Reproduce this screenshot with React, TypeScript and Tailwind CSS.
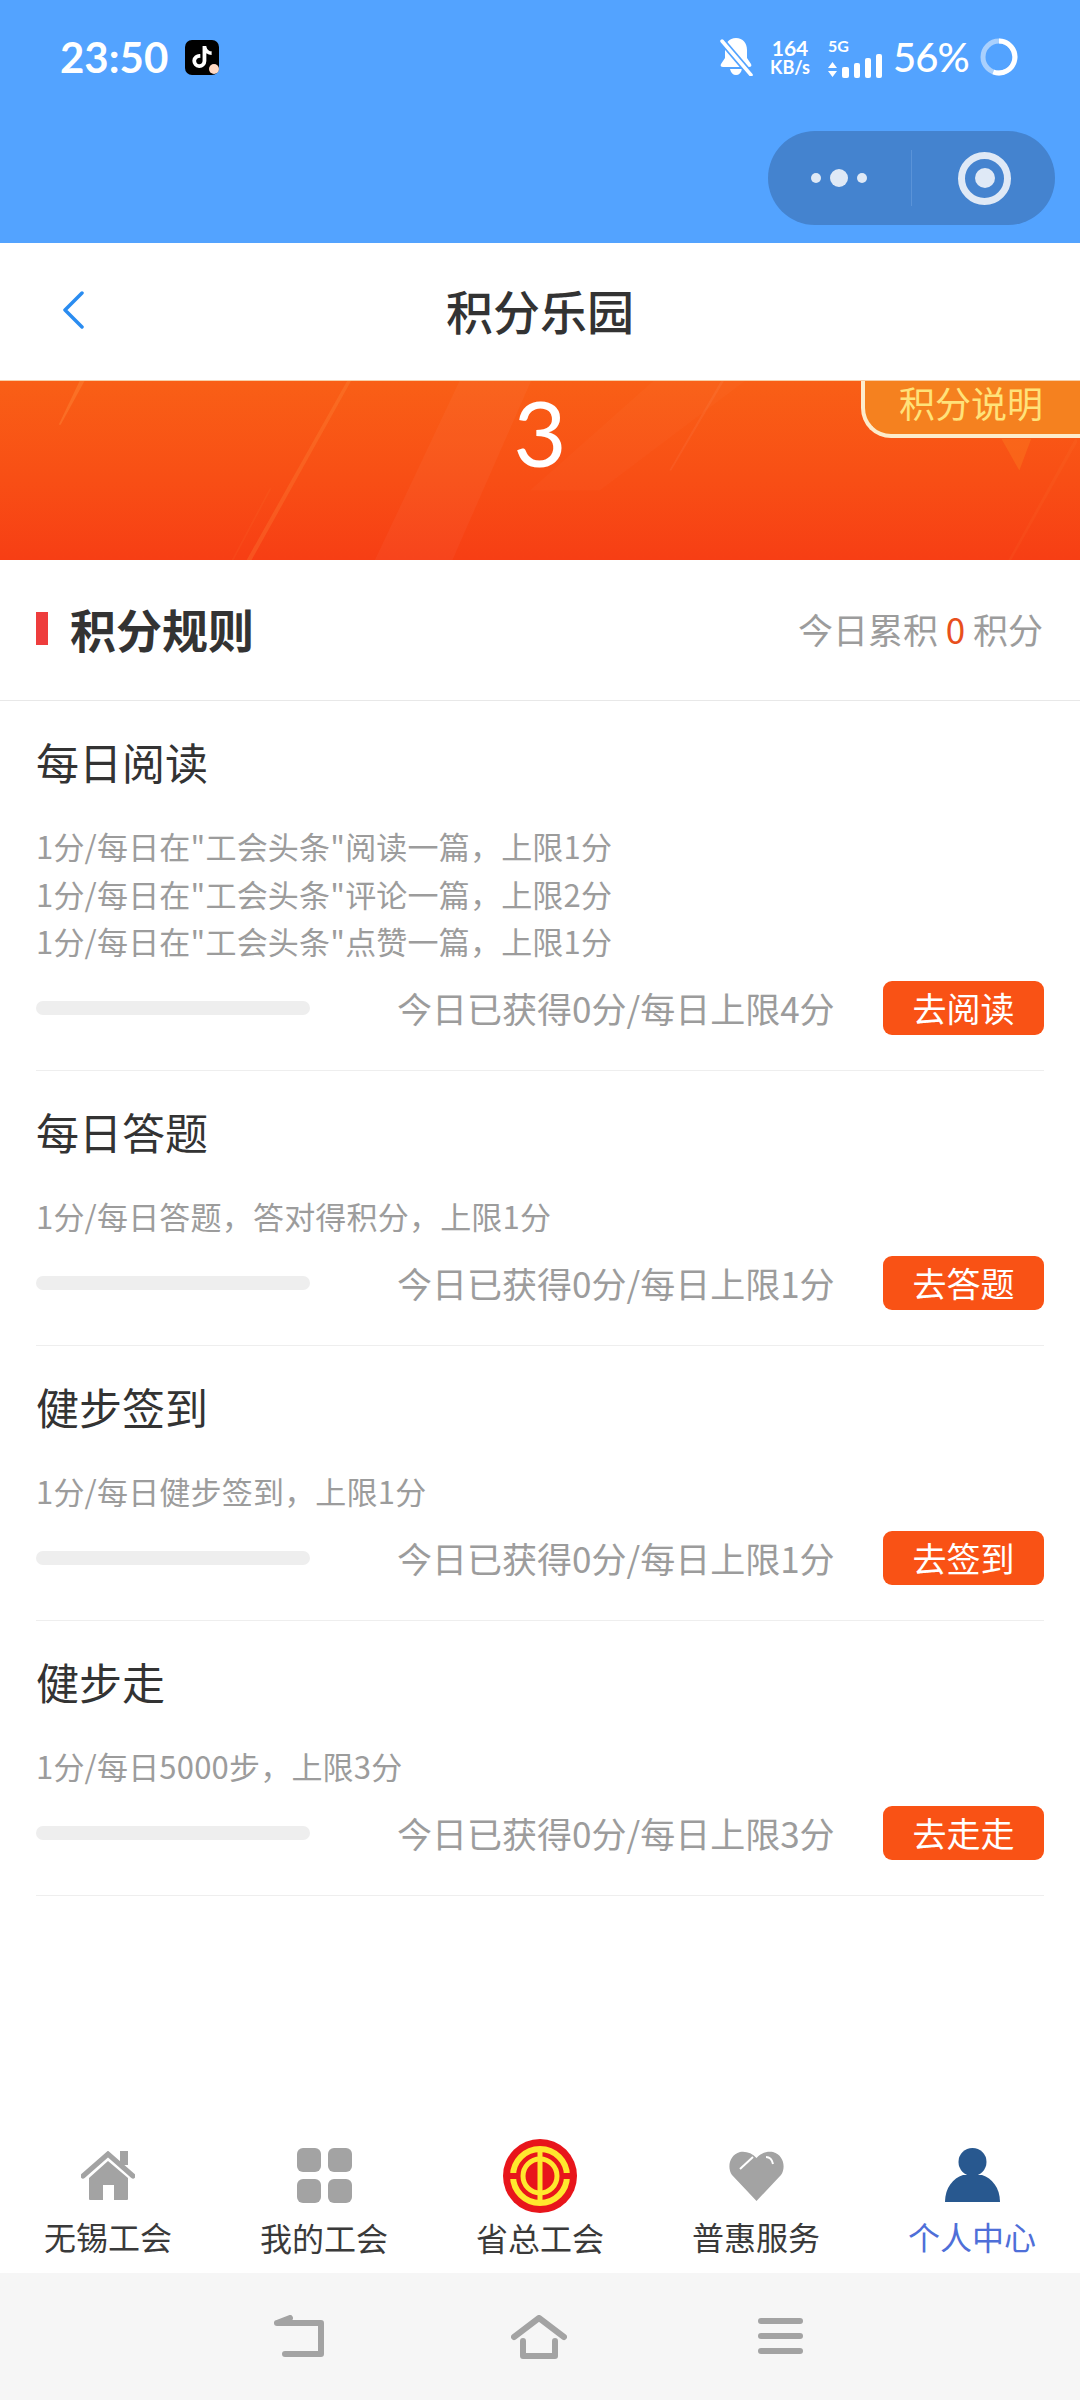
import { FaTiktok } from 'react-icons/fa6';

const rules = [
  {
    title: '每日阅读',
    lines: ['1分/每日在"工会头条"阅读一篇，上限1分', '1分/每日在"工会头条"评论一篇，上限2分', '1分/每日在"工会头条"点赞一篇，上限1分'],
    status: '今日已获得0分/每日上限4分',
    action: '去阅读',
  },
  {
    title: '每日答题',
    lines: ['1分/每日答题，答对得积分，上限1分'],
    status: '今日已获得0分/每日上限1分',
    action: '去答题',
  },
  {
    title: '健步签到',
    lines: ['1分/每日健步签到，上限1分'],
    status: '今日已获得0分/每日上限1分',
    action: '去签到',
  },
  {
    title: '健步走',
    lines: ['1分/每日5000步，上限3分'],
    status: '今日已获得0分/每日上限3分',
    action: '去走走',
  },
];

function StatusBar() {
  return (
    <div className="flex h-[114px] items-center pl-[60px] pr-[62px] text-white font-['Lato','Liberation_Sans',sans-serif]">
      <span className="text-[42px] font-bold leading-none">23:50</span>
      <div className="relative ml-[17px] flex h-[35px] w-[34px] items-center justify-center rounded-[7px] bg-black">
        <FaTiktok className="h-[22px] w-[22px] text-white" />
        <span className="absolute bottom-[1px] right-[0px] h-[10px] w-[10px] rounded-full bg-[#ffd9c4]" />
      </div>
      <svg viewBox="0 0 35 38" className="ml-auto h-[38px] w-[35px]" fill="white">
        <path d="M17 0c7 0 11 5 11 12v8l4 6c1 2 0 3-2 3H4c-2 0-3-1-2-3l4-6v-8C6 5 10 0 17 0z" />
        <path d="M11 31h12c-1 4-3 6-6 6s-5-2-6-6z" />
        <path d="M3 3l29 34" stroke="#53a3ff" strokeWidth="7" />
        <path d="M3 3l29 34" stroke="white" strokeWidth="3.5" strokeLinecap="round" />
      </svg>
      <div className="ml-[14px] flex w-[44px] flex-col items-center font-bold">
        <span className="text-[21px] leading-[20px]">164</span>
        <span className="text-[18px] leading-[18px]">KB/s</span>
      </div>
      <div className="ml-[16px] flex w-[54px] flex-col">
        <span className="text-[16px] font-bold leading-[17px]">5G</span>
        <svg viewBox="0 0 54 24" className="h-[24px] w-[54px]" fill="white">
          <path d="M0 11l4.500-6 4.500 6zM0 14h9l-4.500 6z" transform="translate(0 3)" />
          <rect x="14" y="13" width="7" height="11" rx="2" />
          <rect x="26" y="9" width="6" height="15" rx="2" />
          <rect x="37" y="4" width="6" height="20" rx="2" />
          <rect x="48" y="0" width="6" height="24" rx="2" />
        </svg>
      </div>
      <span className="ml-[11px] w-[75px] text-[40px] font-medium leading-none tracking-[-1px]">56%</span>
      <svg viewBox="0 0 38 38" className="ml-[12px] h-[38px] w-[38px]" fill="none" strokeWidth="5">
        <circle cx="19" cy="19" r="16" stroke="#a9d0fd" />
        <path d="M19 3A16 16 0 1 1 13.300 34" stroke="white" />
      </svg>
    </div>
  );
}

function Capsule() {
  return (
    <div className="flex justify-end pb-[18px] pr-[25px] pt-[17px]">
      <div className="flex h-[94px] w-[287px] items-center rounded-full bg-[#4483cf]">
        <div className="flex w-[143px] items-center justify-end gap-[9px] pr-[44px]">
          <span className="h-[10px] w-[10px] rounded-full bg-[#dfe9f6]" />
          <span className="h-[18px] w-[18px] rounded-full bg-[#dfe9f6]" />
          <span className="h-[10px] w-[10px] rounded-full bg-[#dfe9f6]" />
        </div>
        <div className="h-[56px] w-px bg-[#5a93d8]" />
        <div className="flex flex-1 items-center pl-[46px]">
          <div className="flex h-[53px] w-[53px] items-center justify-center rounded-full border-[7px] border-[#dfe9f6]">
            <span className="h-[20px] w-[20px] rounded-full bg-[#dfe9f6]" />
          </div>
        </div>
      </div>
    </div>
  );
}

function Banner() {
  return (
    <div className="relative h-[180px] border-t border-[#f7cfa8] bg-gradient-to-b from-[#f95f16] to-[#f73e14]">
      {/* faint streaks of the background image */}
      <svg viewBox="0 0 1080 180" className="absolute inset-0 h-full w-full">
        <path d="M77 0h5L58 44h-2z" fill="#ff9a4a" opacity="0.3" />
        <path d="M346 0h4L250 180h-5z" fill="#ff9a4a" opacity="0.22" />
        <path d="M268 108h2l-38 72h-2z" fill="#ff9a4a" opacity="0.08" />
        <path d="M459 0h72L452 180h-78z" fill="#ffffff" opacity="0.035" />
        <path d="M654 0h92L600 110h-70z" fill="#ffffff" opacity="0.02" />
        <path d="M722 0h3L672 90h-2z" fill="#ffffff" opacity="0.05" />
        <path d="M1004 58h30l-12 32z" fill="#fa7a20" opacity="0.45" />
        <path d="M1078 58h2v4l-66 118h-3z" fill="#ff9a4a" opacity="0.08" />
      </svg>
      <div className="relative mx-auto w-fit text-[92px] leading-[102px] text-white font-['Lato','Liberation_Sans',sans-serif]">3</div>
      <div className="absolute right-0 top-0 flex h-[57px] w-[219px] items-center rounded-bl-[30px] border-b-[4px] border-l-[4px] border-[#fdeccb] bg-[#f5811f] pb-[12px] pl-[34px] text-[36px] leading-none text-[#ffe27a]">
        积分说明
      </div>
    </div>
  );
}

function RuleRow({ rule }: { rule: (typeof rules)[number] }) {
  return (
    <div className="mx-[36px] border-b border-[#eeeeee] pb-[35.5px] pt-[39px]">
      <div className="text-[43px] leading-[42px] text-[#333333]">{rule.title}</div>
      <div className="mt-[40px] text-[31px] leading-[47.5px] tracking-[0.2px] text-[#9c9c9c]">
        {rule.lines.map((line) => (
          <div key={line}>{line}</div>
        ))}
      </div>
      <div className="mt-[16px] flex items-center">
        <div className="h-[14px] w-[274px] rounded-full bg-[#eeeeee]" />
        <span className="ml-[87px] text-[35px] leading-none text-[#9c9c9c]">{rule.status}</span>
        <button className="ml-auto h-[54px] w-[161px] rounded-[9px] bg-[#f95215] text-[34px] leading-none text-white">
          {rule.action}
        </button>
      </div>
    </div>
  );
}

function TabBar() {
  return (
    <div className="grid h-[149px] grid-cols-5 text-center text-[32px] leading-none text-[#3a3a3a]">
      <div className="flex flex-col items-center">
        <svg viewBox="0 0 54 50" className="mt-[27px] h-[50px] w-[54px]" fill="#a3a3a3">
          <path d="M2 25L27 3l25 22" fill="none" stroke="#a3a3a3" strokeWidth="5" strokeLinecap="round" />
          <rect x="39" y="0" width="8" height="14" />
          <path d="M27 10L47 27v21a1 1 0 0 1-1 1H33V34H22v15H9a1 1 0 0 1-1-1V27z" />
        </svg>
        <span className="mt-[19px]">无锡工会</span>
      </div>
      <div className="flex flex-col items-center">
        <div className="mt-[24px] grid h-[55px] w-[55px] grid-cols-2 gap-[7px]">
          <span className="rounded-[6px] bg-[#a3a3a3]" />
          <span className="rounded-[6px] bg-[#a3a3a3]" />
          <span className="rounded-[6px] bg-[#a3a3a3]" />
          <span className="rounded-[6px] bg-[#a3a3a3]" />
        </div>
        <span className="mt-[18px]">我的工会</span>
      </div>
      <div className="flex flex-col items-center">
        <svg viewBox="0 0 74 74" className="mt-[15px] h-[74px] w-[74px]" fill="none">
          <circle cx="37" cy="37" r="37" fill="#e8151b" />
          <circle cx="37" cy="37" r="27" stroke="#ffe82e" strokeWidth="6" />
          <rect x="3" y="34" width="19" height="6" fill="#e8151b" />
          <rect x="52" y="34" width="19" height="6" fill="#e8151b" />
          <circle cx="37" cy="37" r="17" stroke="#ffe82e" strokeWidth="5" />
          <rect x="34.500" y="9" width="5" height="56" fill="#ffe82e" />
        </svg>
        <span className="mt-[8px]">省总工会</span>
      </div>
      <div className="flex flex-col items-center">
        <svg viewBox="0 0 55 50" className="mt-[27px] h-[50px] w-[55px]">
          <path d="M27.5 50L3 24C-2 17 0 4 11 1c6-1 12 1 16.500 6C32 2 38 0 44 1c11 3 13 16 8 23z" fill="#a3a3a3" />
          <path d="M11 18L24 6" stroke="white" strokeWidth="2" fill="none" />
          <path d="M37 6c3 0 6 2 7 7" stroke="white" strokeWidth="2" fill="none" />
        </svg>
        <span className="mt-[19px]">普惠服务</span>
      </div>
      <div className="flex flex-col items-center text-[#4f6fd8]">
        <svg viewBox="0 0 55 54" className="mt-[24px] h-[54px] w-[55px]" fill="#28588f">
          <circle cx="27.500" cy="14" r="14" />
          <path d="M0 54c0-14 8-24 18-27h19c10 3 18 13 18 27z" />
        </svg>
        <span className="mt-[18px]">个人中心</span>
      </div>
    </div>
  );
}

function NavBar() {
  return (
    <div className="flex h-[127px] items-start bg-[#f6f6f6] pl-[274px] pt-[42px]">
      <svg viewBox="0 0 50 42" className="h-[42px] w-[50px]" fill="none" stroke="#a3a3a3" strokeWidth="6" strokeLinecap="round" strokeLinejoin="round">
        <path d="M3 8L16 3M3 8h44v31H11" />
      </svg>
      <svg viewBox="0 0 56 44" className="ml-[187px] h-[44px] w-[56px]" fill="none" stroke="#a3a3a3" strokeWidth="6" strokeLinecap="round" strokeLinejoin="round">
        <path d="M3 22L28 3l25 19M12 26v15h32V26" />
      </svg>
      <div className="ml-[191px] flex w-[45px] flex-col gap-[9px] pt-[3px]">
        <span className="h-[6px] rounded-full bg-[#a3a3a3]" />
        <span className="h-[6px] rounded-full bg-[#a3a3a3]" />
        <span className="h-[6px] rounded-full bg-[#a3a3a3]" />
      </div>
    </div>
  );
}

export default function App() {
  return (
    <div className="flex h-[2400px] w-[1080px] flex-col overflow-hidden bg-white font-['Noto_Sans_CJK_SC','Noto_Sans',sans-serif]">
      <div className="bg-[#53a3ff]">
        <StatusBar />
        <Capsule />
      </div>
      <div className="relative flex h-[137px] items-center justify-center pb-[4px]">
        <svg viewBox="0 0 22 38" className="absolute left-[62px] top-[48px] h-[38px] w-[22px]" fill="none" stroke="#2a8cf0" strokeWidth="3.500" strokeLinecap="round" strokeLinejoin="round">
          <path d="M20 2L3 19l17 17" />
        </svg>
        <span className="text-[47px] font-medium leading-none text-[#333333]">积分乐园</span>
      </div>
      <Banner />
      <div className="flex h-[141px] items-center border-b border-[#e8e8e8] pb-[4px] pl-[36px] pr-[37px]">
        <span className="h-[33px] w-[12px] bg-[#ee3d3d]" />
        <span className="ml-[22px] text-[46px] font-bold leading-none text-[#333333]">积分规则</span>
        <span className="ml-auto text-[35px] leading-none text-[#9c9c9c]">
          今日累积 <span className="text-[#e8501c]">0</span> 积分
        </span>
      </div>
      <div className="flex-1">
        {rules.map((rule) => (
          <RuleRow key={rule.title} rule={rule} />
        ))}
      </div>
      <TabBar />
      <NavBar />
    </div>
  );
}
